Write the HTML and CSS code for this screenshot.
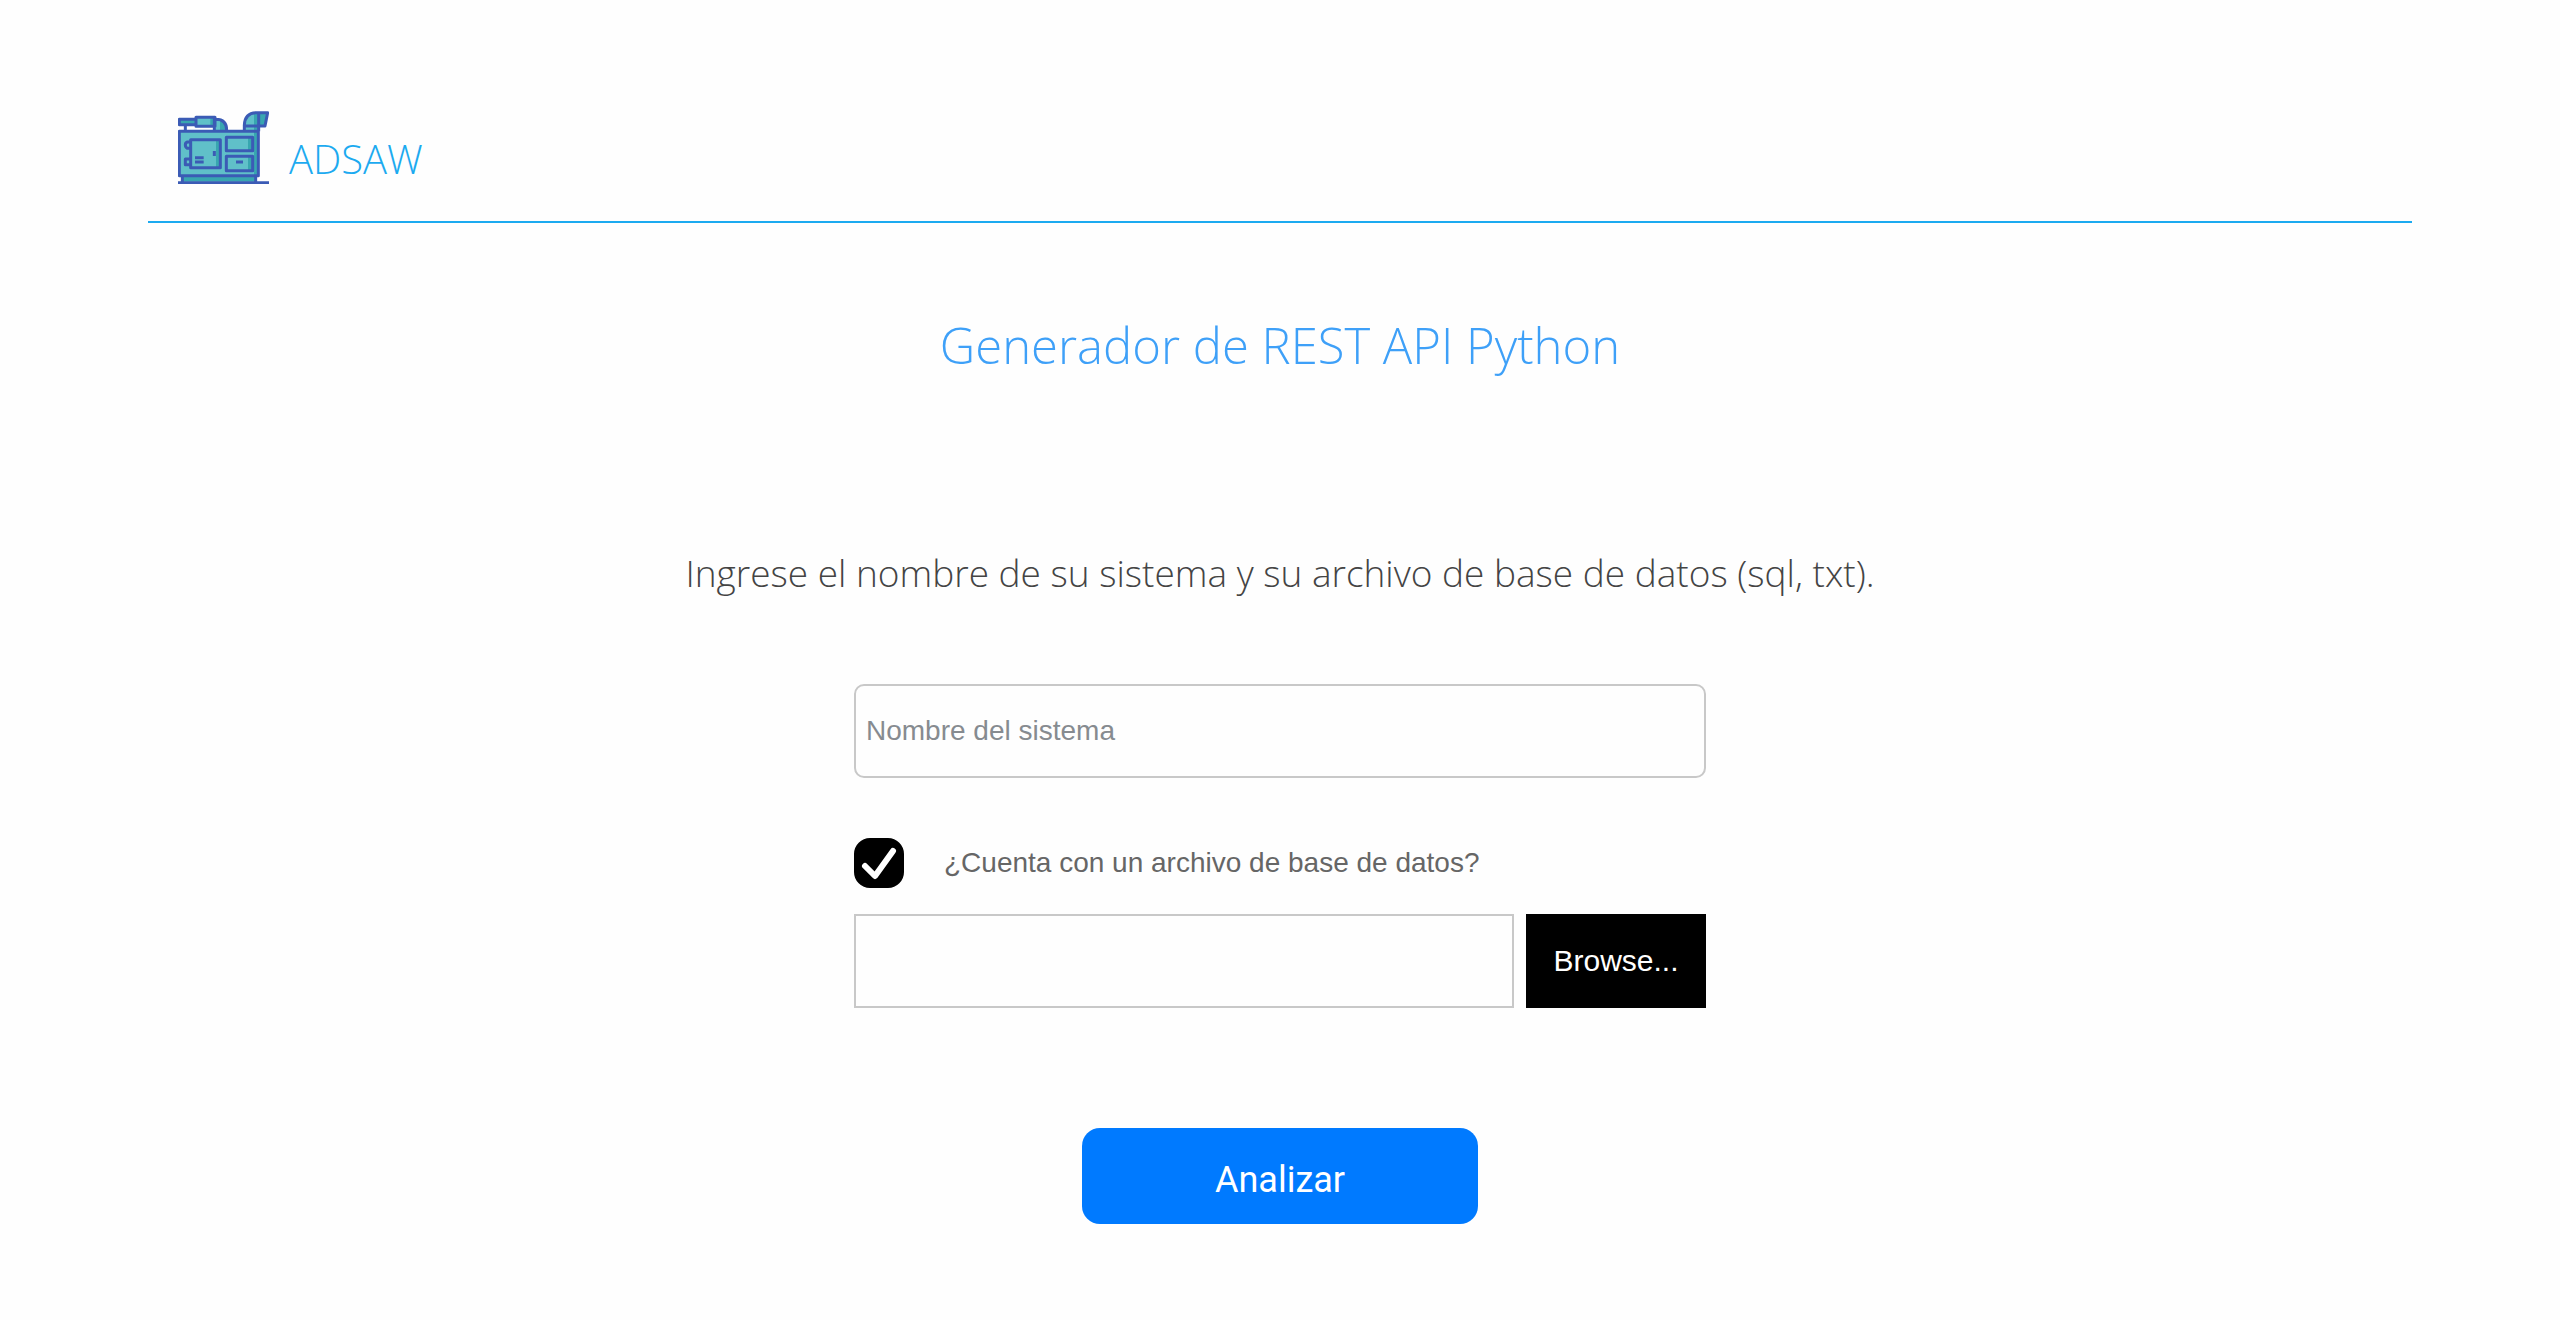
FILE: index.html
```html
<!DOCTYPE html>
<html lang="es">
<head>
<meta charset="utf-8">
<meta name="viewport" content="width=device-width, initial-scale=1">
<title>ADSAW</title>
<link rel="stylesheet" href="styles.css">
</head>
<body>
<header class="site-header">
  <a class="brand" href="#">
    <svg class="brand-logo" viewBox="114 63 273 219" aria-hidden="true">
      <path fill="#60c0c9" d="M118 124H355V257H118zM168 82H225V109H168zM223 87Q260 84 260 121H223zM313 120V105Q313 68 350 68H356V120z"/>
      <path fill="#38a6b0" d="M118 89H168V103H118zM211 82H225V109H211zM240 92Q260 94 260 121H240zM342 68H382L375 108H356V257H342zM127 259H347V275H127zM228 149H241V233H228zM324 142H338V182H324zM324 199H338V242H324z"/>
      <g fill="none" stroke="#3b5bb5" stroke-width="9" stroke-linejoin="round">
        <path d="M168 88H118V104H168M168 82H225V109H168zM136 104V124M223 121V88H228Q260 88 260 121M118 124H355V257H118z"/>
        <path d="M313 120V106Q314 68 350 68H383L375 108H313M356 68V124"/>
        <path d="M152 149H241V233H152zM259 142H338V182H259zM259 199H338V242H259zM152 156H142Q136 158 136 165T142 175H152M152 207H136V224H152"/>
        <path d="M127 257V278M347 257V278M114 278H387M165 203H191M165 216H191M288 216H309M223 183V198"/>
      </g>
    </svg>
    <span class="brand-name">ADSAW</span>
  </a>
</header>
<main class="content">
  <h1 class="title">Generador de REST API Python</h1>
  <p class="intro">Ingrese el nombre de su sistema y su archivo de base de datos (sql, txt).</p>
  <form class="form">
    <input class="field field-name" type="text" placeholder="Nombre del sistema" aria-label="Nombre del sistema">
    <label class="check">
      <input class="check-box" type="checkbox" checked>
      <svg class="check-mark" viewBox="0 0 50 50" aria-hidden="true"><path d="M11 28L21 38L39 13" fill="none" stroke="#fff" stroke-width="6" stroke-linecap="round" stroke-linejoin="round"/></svg>
      <span>¿Cuenta con un archivo de base de datos?</span>
    </label>
    <div class="file-row">
      <input class="field" type="text" readonly aria-label="Archivo de base de datos">
      <button class="browse" type="button">Browse...</button>
    </div>
    <button class="submit" type="submit">Analizar</button>
  </form>
</main>
</body>
</html>
```
FILE: styles.css
```css
* {
  box-sizing: border-box;
}

body {
  margin: 0;
  background: #fefefe;
  font-family: "Liberation Sans", Arial, sans-serif;
}

.site-header {
  display: flex;
  margin: 0 148px;
  padding: 111px 30px 34px;
  border-bottom: 2px solid #1caaf0;
}

.brand {
  display: flex;
  align-items: flex-start;
  gap: 20px;
  color: #1caaf0;
  text-decoration: none;
}

.brand-logo {
  width: 91px;
  height: 73px;
}

.brand-name {
  padding-top: 20px;
  font: 300 40px/56px "Open Sans", "Noto Sans", sans-serif;
}

.content {
  padding: 86px 24px;
}

.title {
  margin: 0 0 164px;
  color: #3ea0f8;
  font: 300 49px/72px "Open Sans", "Noto Sans", sans-serif;
  text-align: center;
}

.intro {
  margin: 0 0 83px;
  color: #444;
  font: 300 37px/56px "Open Sans", "Noto Sans", sans-serif;
  text-align: center;
}

.form {
  display: flex;
  flex-direction: column;
  max-width: 852px;
  margin: 0 auto;
}

.field {
  flex: 1;
  min-width: 0;
  height: 94px;
  padding: 0 10px;
  border: 2px solid #c8c8c8;
  background: #fefefe;
  font: 28px "Liberation Sans", Arial, sans-serif;
}

.field::placeholder {
  color: #868b90;
  opacity: 1;
}

.field-name {
  flex: none;
  border-radius: 10px;
}

.check {
  display: grid;
  grid-template-columns: 50px 1fr;
  column-gap: 40px;
  align-items: center;
  margin: 60px 0 26px;
  color: #666;
  font-size: 28px;
}

.check-box,
.check-mark {
  grid-area: 1 / 1;
  width: 50px;
  height: 50px;
  margin: 0;
}

.check-box {
  appearance: none;
  border: 2px solid #000;
  border-radius: 16px;
}

.check-box:checked {
  background: #000;
}

.check-mark {
  pointer-events: none;
}

.file-row {
  display: flex;
  gap: 12px;
}

.browse {
  width: 180px;
  border: 0;
  background: #000;
  color: #fff;
  font: 30px "Liberation Sans", Arial, sans-serif;
}

.submit {
  align-self: center;
  width: 396px;
  height: 96px;
  margin-top: 120px;
  padding: 8px 0 0;
  border: 0;
  border-radius: 18px;
  background: #007aff;
  color: #fff;
  font: 36px Roboto, sans-serif;
}
```
